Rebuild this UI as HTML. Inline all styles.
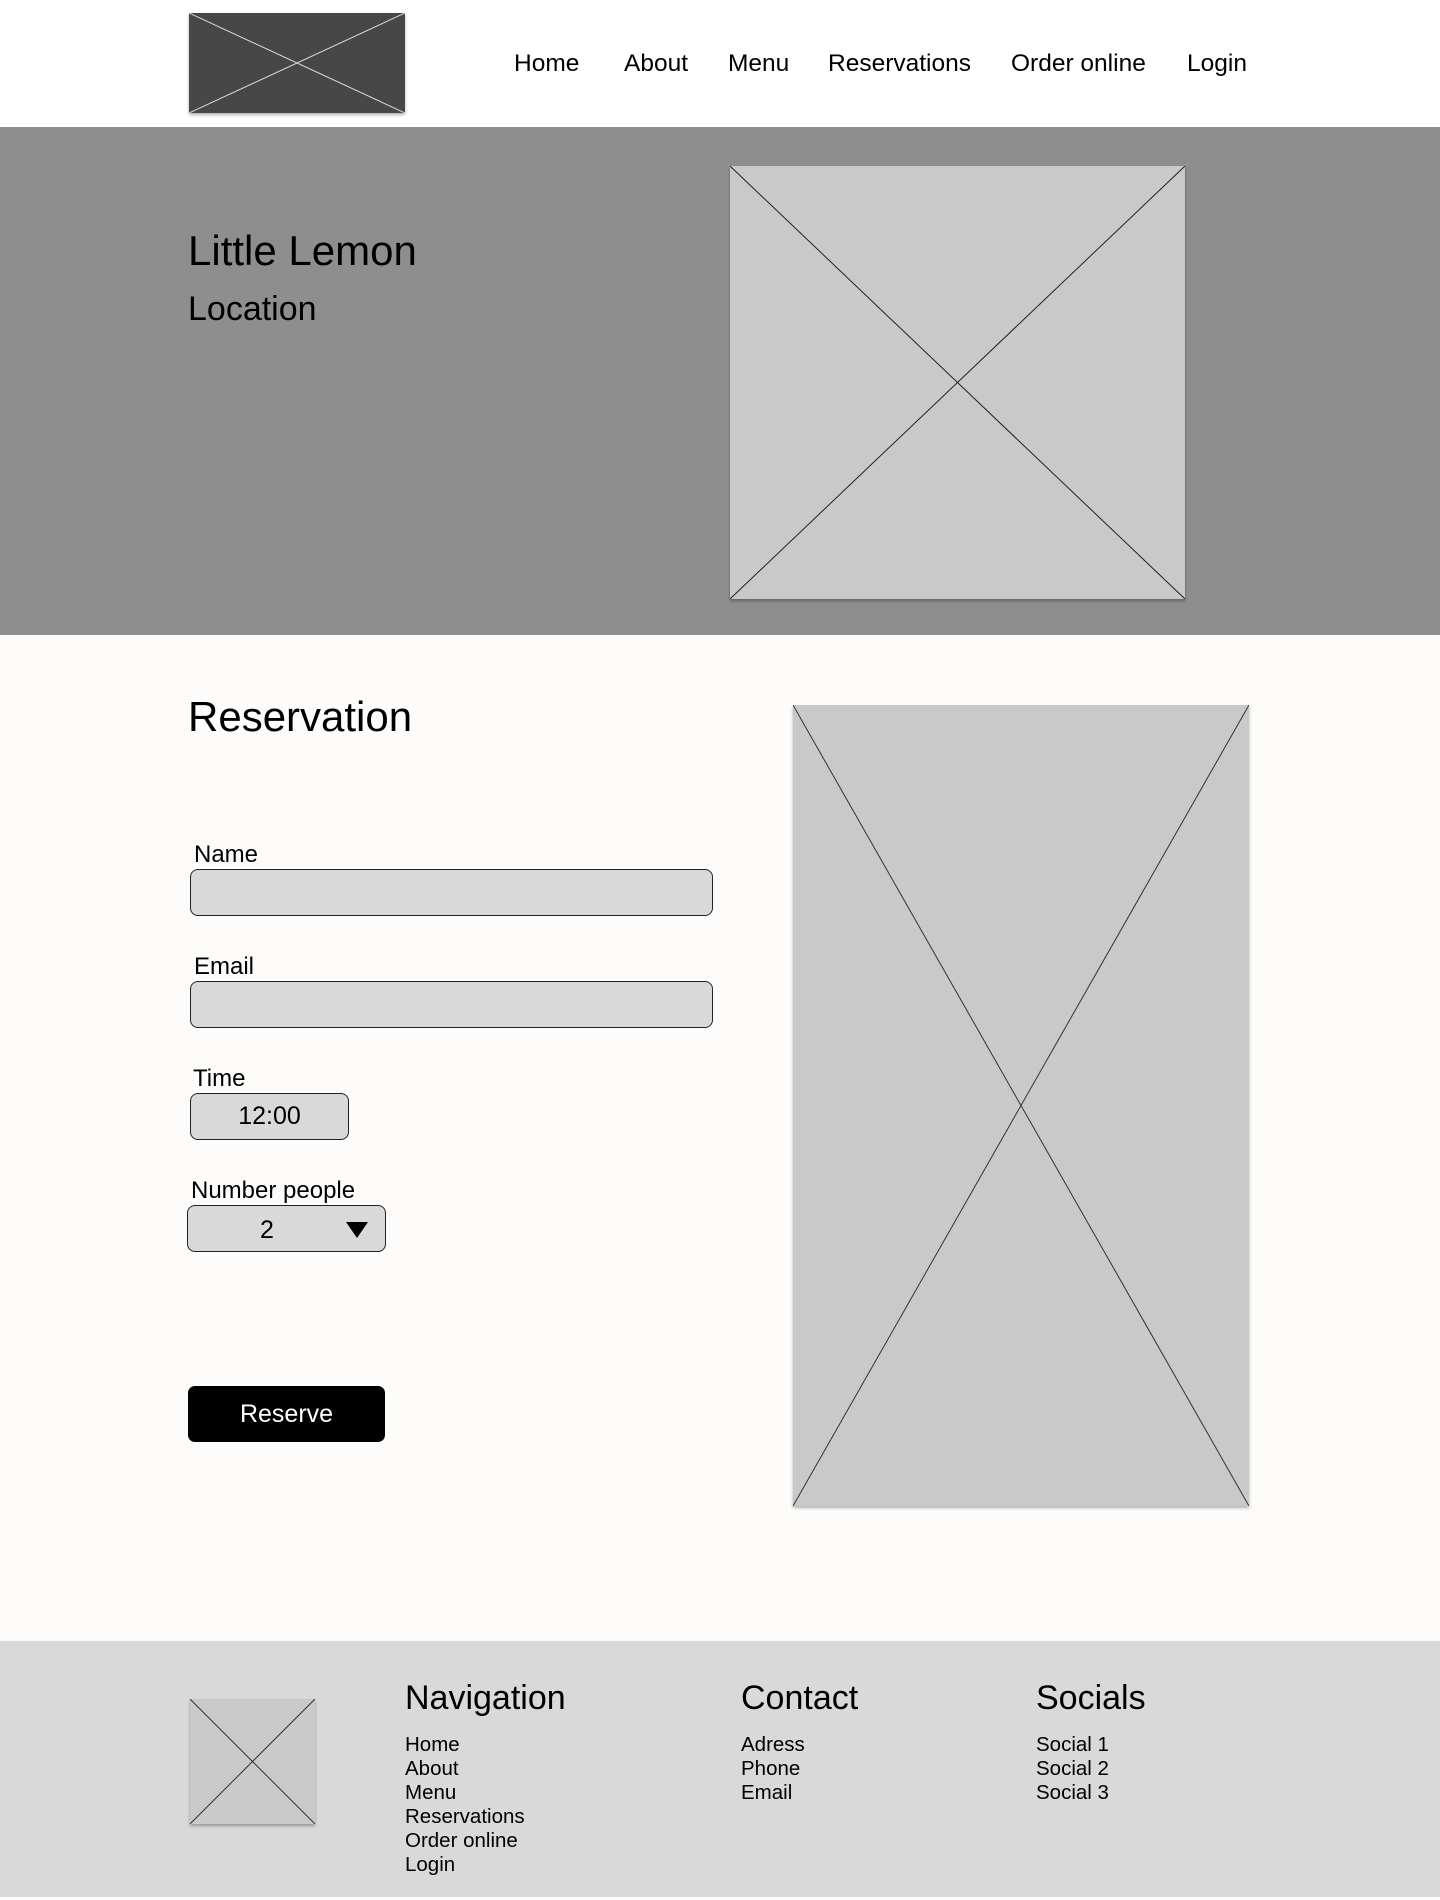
<!DOCTYPE html>
<html><head><meta charset="utf-8"><style>
*{margin:0;padding:0;box-sizing:border-box}
body{width:1440px;height:1900px;background:#fff;font-family:"Liberation Sans",sans-serif;color:#000;position:relative;overflow:hidden}
.a{position:absolute}
.ph{position:absolute;box-shadow:0 2px 3px rgba(0,0,0,.3)}
.ph svg{width:100%;height:100%;display:block}
.nav{position:absolute;top:50px;font-size:24.5px}
.lbl{position:absolute;font-size:24px}
.inp{position:absolute;background:#d9d9d9;border:1.5px solid #222;border-radius:8px}
.fl{position:absolute;font-size:20.5px;line-height:24px}
.fh{position:absolute;font-size:34px;top:1679px}
</style></head><body>
<div class="ph" style="left:189px;top:13px;width:216px;height:100px;background:#474747"><svg viewBox="0 0 216 100" preserveAspectRatio="none"><path d="M0 0L216 100M216 0L0 100" stroke="#ddd" stroke-width="1"/></svg></div>
<div class="nav" style="left:514px">Home</div>
<div class="nav" style="left:624px">About</div>
<div class="nav" style="left:728px">Menu</div>
<div class="nav" style="left:828px">Reservations</div>
<div class="nav" style="left:1011px">Order online</div>
<div class="nav" style="left:1187px">Login</div>

<div class="a" style="left:0;top:127px;width:1440px;height:508px;background:#8e8e8e"></div>
<div class="a" style="left:188px;top:227px;font-size:42px">Little Lemon</div>
<div class="a" style="left:188px;top:290px;font-size:34px">Location</div>
<div class="ph" style="left:730px;top:166px;width:455px;height:433px;background:#c9c9c9"><svg viewBox="0 0 455 433" preserveAspectRatio="none"><path d="M0 0L455 433M455 0L0 433" stroke="#222" stroke-width="1"/></svg></div>

<div class="a" style="left:0;top:635px;width:1440px;height:1006px;background:#fdfcfa"></div>
<div class="a" style="left:188px;top:693px;font-size:42px">Reservation</div>
<div class="lbl" style="left:194px;top:841px">Name</div>
<div class="inp" style="left:190px;top:869px;width:523px;height:47px"></div>
<div class="lbl" style="left:194px;top:953px">Email</div>
<div class="inp" style="left:190px;top:981px;width:523px;height:47px"></div>
<div class="lbl" style="left:193px;top:1065px">Time</div>
<div class="inp" style="left:190px;top:1093px;width:159px;height:47px;font-size:25px;text-align:center;line-height:44px">12:00</div>
<div class="lbl" style="left:191px;top:1177px">Number people</div>
<div class="inp" style="left:187px;top:1205px;width:199px;height:47px;font-size:25px;line-height:48px"><span style="position:absolute;left:72px">2</span><svg style="position:absolute;left:158px;top:16px" width="22" height="16"><path d="M0 0H22L11 16Z" fill="#000"/></svg></div>
<div class="a" style="left:188px;top:1386px;width:197px;height:56px;background:#000;border-radius:7px;color:#fff;font-size:25px;text-align:center;line-height:56px">Reserve</div>
<div class="ph" style="left:793px;top:705px;width:456px;height:801px;background:#c9c9c9"><svg viewBox="0 0 456 801" preserveAspectRatio="none"><path d="M0 0L456 801M456 0L0 801" stroke="#333" stroke-width="1"/></svg></div>

<div class="a" style="left:0;top:1641px;width:1440px;height:256px;background:#d9d9d9"></div>
<div class="ph" style="left:190px;top:1699px;width:125px;height:125px;background:#c9c9c9"><svg viewBox="0 0 125 125" preserveAspectRatio="none"><path d="M0 0L125 125M125 0L0 125" stroke="#333" stroke-width="1"/></svg></div>
<div class="fh" style="left:405px">Navigation</div>
<div class="fl" style="left:405px;top:1733px">Home<br>About<br>Menu<br>Reservations<br>Order online<br>Login</div>
<div class="fh" style="left:741px">Contact</div>
<div class="fl" style="left:741px;top:1733px">Adress<br>Phone<br>Email</div>
<div class="fh" style="left:1036px">Socials</div>
<div class="fl" style="left:1036px;top:1733px">Social 1<br>Social 2<br>Social 3</div>
</body></html>
